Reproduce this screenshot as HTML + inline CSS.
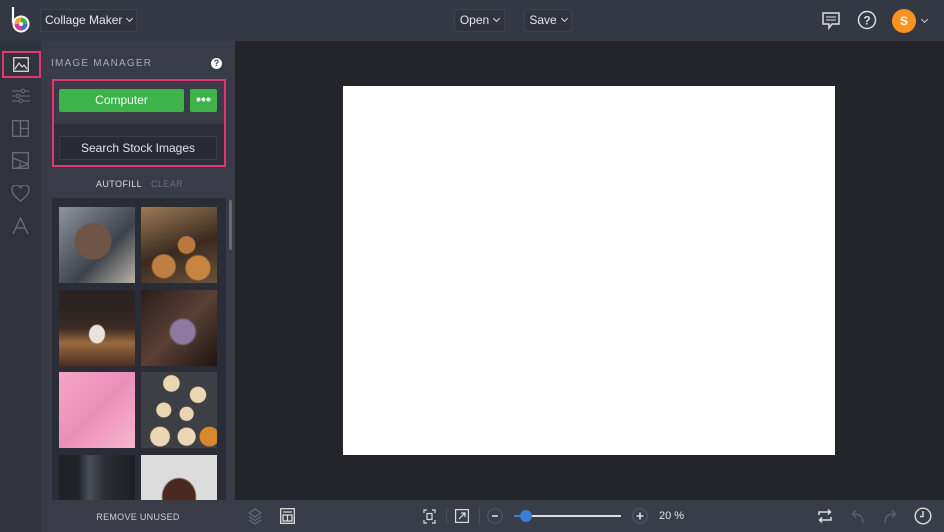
<!DOCTYPE html>
<html><head><meta charset="utf-8"><style>
*{margin:0;padding:0;box-sizing:border-box}
body{width:944px;height:532px;overflow:hidden;background:#23252b;font-family:"Liberation Sans",sans-serif;position:relative}
.abs{position:absolute}
.top{left:0;top:0;width:944px;height:41px;background:#343842}
.btn{position:absolute;height:23px;border:1px solid #3e424c;background:#31343d;border-radius:2px;color:#e4e6ea;font-size:12px;line-height:21px;padding:0 4px;white-space:nowrap;text-align:center}
.chev{display:inline-block;width:5px;height:5px;border-right:1.2px solid #ddd;border-bottom:1.2px solid #ddd;transform:rotate(45deg);margin-left:5px;vertical-align:3px}
.rail{left:0;top:41px;width:41px;height:491px;background:#30333b}
.panel{left:41px;top:41px;width:194px;height:491px;background:#393c46}
.thumbs{left:52px;top:198px;width:174px;height:302px;background:#2a2d35;overflow:hidden}
.t{position:absolute;width:76px;height:76px}
.bottom{left:235px;top:500px;width:709px;height:32px;background:#393d47}
svg{position:absolute}
</style></head><body>
<div class="abs top"></div>
<svg style="left:9px;top:6px" width="24" height="28" viewBox="0 0 24 28">
<line x1="4" y1="1" x2="4" y2="17" stroke="#fff" stroke-width="2.2"/>
<circle cx="12" cy="18" r="8.5" fill="#fff"/>
<path d="M12 18L12 11.5A6.5 6.5 0 0 1 18.5 18z" fill="#3cb44b"/>
<path d="M12 18L18.5 18A6.5 6.5 0 0 1 12 24.5z" fill="#3f6fd8"/>
<path d="M12 18L12 24.5A6.5 6.5 0 0 1 5.5 18z" fill="#d83c8c"/>
<path d="M12 18L5.5 18A6.5 6.5 0 0 1 12 11.5z" fill="#f2a62e"/>
<circle cx="12" cy="18" r="2" fill="#fff"/>
</svg>
<div class="btn" style="left:40px;top:9px;width:97px;">Collage Maker<span class="chev"></span></div>
<div class="btn" style="left:454px;top:9px;width:51px;">Open<span class="chev"></span></div>
<div class="btn" style="left:524px;top:9px;width:48px;">Save<span class="chev"></span></div>
<svg style="left:821px;top:11px" width="20" height="20" viewBox="0 0 20 20"><path d="M2 2h16v11h-7l-3 4v-4H2z" fill="none" stroke="#ddd" stroke-width="1.5"/><path d="M5 6h10M5 9h10" stroke="#ddd"/></svg>
<svg style="left:857px;top:10px" width="20" height="20" viewBox="0 0 20 20"><circle cx="10" cy="10" r="8.5" fill="none" stroke="#ddd" stroke-width="1.5"/><text x="10" y="14.5" font-size="12" font-family="Liberation Sans" fill="#ddd" text-anchor="middle" font-weight="bold">?</text></svg>
<div class="abs" style="left:892px;top:9px;width:24px;height:24px;border-radius:50%;background:#f7931e;color:#fff;font-size:12px;font-weight:bold;text-align:center;line-height:24px">S</div>
<span class="abs chev" style="left:917px;top:17px;border-color:#ccc"></span>

<div class="abs rail"></div>
<div class="abs" style="left:2px;top:51px;width:39px;height:27px;border:2px solid #e0386e"></div>
<svg style="left:13px;top:57px" width="16" height="15" viewBox="0 0 16 15"><rect x=".75" y=".75" width="14.5" height="13.5" fill="none" stroke="#ddd" stroke-width="1.3"/><path d="M2 12l4-6 3 4 2-2 3 4" fill="none" stroke="#ddd" stroke-width="1.2"/></svg>
<svg style="left:12px;top:88px" width="18" height="16" viewBox="0 0 18 16" stroke="#6b6f7a" fill="none"><path d="M0 3h18M0 8h18M0 13h18"/><circle cx="11" cy="3" r="1.8" fill="#30333b"/><circle cx="6" cy="8" r="1.8" fill="#30333b"/><circle cx="9" cy="13" r="1.8" fill="#30333b"/></svg>
<svg style="left:12px;top:120px" width="17" height="17" viewBox="0 0 17 17" stroke="#6b6f7a" fill="none" stroke-width="1.3"><rect x=".7" y=".7" width="15.6" height="15.6"/><path d="M8.5 .7v15.6M8.5 8.5h7.8"/></svg>
<svg style="left:12px;top:152px" width="17" height="17" viewBox="0 0 17 17" stroke="#6b6f7a" fill="none" stroke-width="1.3"><rect x=".7" y=".7" width="15.6" height="15.6"/><path d="M.7 6l15.6 6M4 16.3l12.3-4M8 10.5v5.8"/></svg>
<svg style="left:11px;top:185px" width="19" height="17" viewBox="0 0 19 17"><path d="M9.5 16C3 11 1 8 1 5a4 4 0 0 1 8.5-1.5A4 4 0 0 1 18 5c0 3-2 6-8.5 11z" fill="none" stroke="#6b6f7a" stroke-width="1.3"/></svg>
<svg style="left:12px;top:217px" width="17" height="17" viewBox="0 0 17 17"><path d="M1 17L8.5 1 16 17M4 11h9" fill="none" stroke="#6b6f7a" stroke-width="1.3"/></svg>

<div class="abs panel"></div>
<div class="abs" style="left:51px;top:58px;color:#a7abb4;font-size:10px;letter-spacing:1.2px">IMAGE MANAGER</div>
<div class="abs" style="left:211px;top:58px;width:11px;height:11px;border-radius:50%;background:#fff;color:#393c46;font-size:9px;font-weight:bold;text-align:center;line-height:11px">?</div>
<div class="abs" style="left:52px;top:79px;width:174px;height:88px;border:2px solid #e0386e;background:#2c2f37"></div>
<div class="abs" style="left:54px;top:81px;width:170px;height:43px;background:#393c46"></div>
<div class="abs" style="left:59px;top:89px;width:125px;height:23px;background:#3db34a;border-radius:2px;color:#f0fff0;font-size:12px;text-align:center;line-height:23px">Computer</div>
<div class="abs" style="left:190px;top:89px;width:27px;height:23px;background:#3db34a;border-radius:2px;color:#fff;font-size:14px;font-weight:bold;text-align:center;line-height:20px">•••</div>
<div class="abs" style="left:59px;top:136px;width:158px;height:24px;background:#292b33;border:1px solid #3a3d46;color:#e0e2e6;font-size:12px;text-align:center;line-height:22px">Search Stock Images</div>
<div class="abs" style="left:96px;top:179px;color:#d8dade;font-size:9px;letter-spacing:.4px">AUTOFILL</div>
<div class="abs" style="left:151px;top:179px;color:#6b6f7a;font-size:9px;letter-spacing:.4px">CLEAR</div>
<div class="abs thumbs">
<div class="t" style="left:7px;top:9px;background:radial-gradient(circle at 45% 45%,#6e5447 0 30%,transparent 32%),linear-gradient(135deg,#8d949c,#3d434b 60%,#b9b2a8)"></div>
<div class="t" style="left:89px;top:9px;background:radial-gradient(circle at 60% 50%,#b9783d 0 14%,transparent 16%),radial-gradient(circle at 30% 78%,#c07f42 0 14%,transparent 16%),radial-gradient(circle at 75% 80%,#c7843f 0 14%,transparent 16%),linear-gradient(160deg,#9c7a57,#3a2a1f 55%,#6d5139)"></div>
<div class="t" style="left:7px;top:92px;background:radial-gradient(ellipse at 50% 58%,#e9e3d7 0 14%,transparent 16%),linear-gradient(180deg,#2b2422 0 20%,#3a2a24 50%,#9a6a3e 70%,#4a2f22)"></div>
<div class="t" style="left:89px;top:92px;background:radial-gradient(ellipse at 55% 55%,#8d7aa0 0 20%,transparent 24%),linear-gradient(135deg,#2a1e1a,#5a4035 50%,#1e1512)"></div>
<div class="t" style="left:7px;top:174px;background:linear-gradient(135deg,#f4a6c6,#ec8fb6 50%,#f6b7d0)"></div>
<div class="t" style="left:89px;top:174px;background:radial-gradient(circle at 40% 15%,#ead6b2 0 10%,transparent 11%),radial-gradient(circle at 75% 30%,#ead6b2 0 10%,transparent 11%),radial-gradient(circle at 30% 50%,#ead6b2 0 11%,transparent 12%),radial-gradient(circle at 60% 55%,#ead6b2 0 11%,transparent 12%),radial-gradient(circle at 25% 85%,#ead6b2 0 11%,transparent 12%),radial-gradient(circle at 60% 85%,#ead6b2 0 11%,transparent 12%),radial-gradient(circle at 90% 85%,#d8892f 0 10%,transparent 11%),#3e3f44"></div>
<div class="t" style="left:7px;top:257px;background:linear-gradient(90deg,#1f2226 0 25%,#4a4f56 40%,#2b2f34 60%,#1b1e22)"></div>
<div class="t" style="left:89px;top:257px;background:radial-gradient(ellipse at 50% 55%,#4a2a1e 0 30%,transparent 33%),#dcdcdc"></div>
</div>
<div class="abs" style="left:229px;top:200px;width:3px;height:50px;background:#666a74;border-radius:2px"></div>
<div class="abs" style="left:41px;top:512px;width:194px;text-align:center;color:#d0d2d7;font-size:9px;letter-spacing:.3px">REMOVE UNUSED</div>

<div class="abs" style="left:343px;top:86px;width:492px;height:369px;background:#fff"></div>

<div class="abs bottom"></div>
<svg style="left:248px;top:508px" width="14" height="17" viewBox="0 0 14 17" stroke="#666a74" fill="none" stroke-width="1.2"><path d="M7 1l6 4-6 4-6-4z M1 8.5l6 4 6-4M1 12l6 4 6-4"/></svg>
<svg style="left:280px;top:508px" width="15" height="16" viewBox="0 0 15 16" fill="none" stroke="#ddd" stroke-width="1.3"><rect x=".7" y=".7" width="13.6" height="14.6"/><path d="M3 4h9M3 7h9v6H3zM7.5 7v6"/></svg>
<svg style="left:423px;top:509px" width="13" height="15" viewBox="0 0 13 15" fill="none" stroke="#ddd" stroke-width="1.2"><path d="M1 4V1h3M9 1h3v3M12 11v3H9M4 14H1v-3"/><rect x="4" y="4.5" width="5" height="6"/></svg>
<div class="abs" style="left:446px;top:507px;width:1px;height:18px;background:#4a4e58"></div>
<svg style="left:455px;top:509px" width="14" height="14" viewBox="0 0 14 14" fill="none" stroke="#ddd" stroke-width="1.2"><rect x=".6" y=".6" width="12.8" height="12.8"/><path d="M4 10l6-6M6 4h4v4"/></svg>
<div class="abs" style="left:479px;top:507px;width:1px;height:18px;background:#4a4e58"></div>
<svg style="left:487px;top:508px" width="16" height="16" viewBox="0 0 16 16"><circle cx="8" cy="8" r="7.3" fill="none" stroke="#555964"/><path d="M5 8h6" stroke="#ddd" stroke-width="1.6"/></svg>
<div class="abs" style="left:514px;top:515px;width:107px;height:2px;background:#ddd"></div>
<div class="abs" style="left:514px;top:515px;width:12px;height:2px;background:#3d7fd6"></div>
<div class="abs" style="left:520px;top:510px;width:12px;height:12px;border-radius:50%;background:#3d7fd6"></div>
<svg style="left:632px;top:508px" width="16" height="16" viewBox="0 0 16 16"><circle cx="8" cy="8" r="7.3" fill="none" stroke="#555964"/><path d="M4.5 8h7M8 4.5v7" stroke="#ddd" stroke-width="1.6"/></svg>
<div class="abs" style="left:659px;top:510px;color:#e0e2e6;font-size:11px">20 %</div>
<svg style="left:818px;top:508px" width="14" height="16" viewBox="0 0 14 16" fill="none" stroke="#ddd" stroke-width="1.5"><path d="M1 7V4h11M10 1.5l2.5 2.5L10 6.5M13 9v3H2M4 9.5L1.5 12 4 14.5"/></svg>
<svg style="left:851px;top:508px" width="14" height="16" viewBox="0 0 14 16" fill="none" stroke="#5c606a" stroke-width="1.4"><path d="M12 15C12 8 9 6 2 6M5 2.5L1.5 6 5 9.5"/></svg>
<svg style="left:883px;top:508px" width="14" height="16" viewBox="0 0 14 16" fill="none" stroke="#5c606a" stroke-width="1.4"><path d="M2 15C2 8 5 6 12 6M9 2.5L12.5 6 9 9.5"/></svg>
<svg style="left:914px;top:507px" width="18" height="18" viewBox="0 0 18 18" fill="none" stroke="#ddd" stroke-width="1.4"><circle cx="9" cy="9" r="7.8"/><path d="M9 4v5.5H6"/></svg>
</body></html>
